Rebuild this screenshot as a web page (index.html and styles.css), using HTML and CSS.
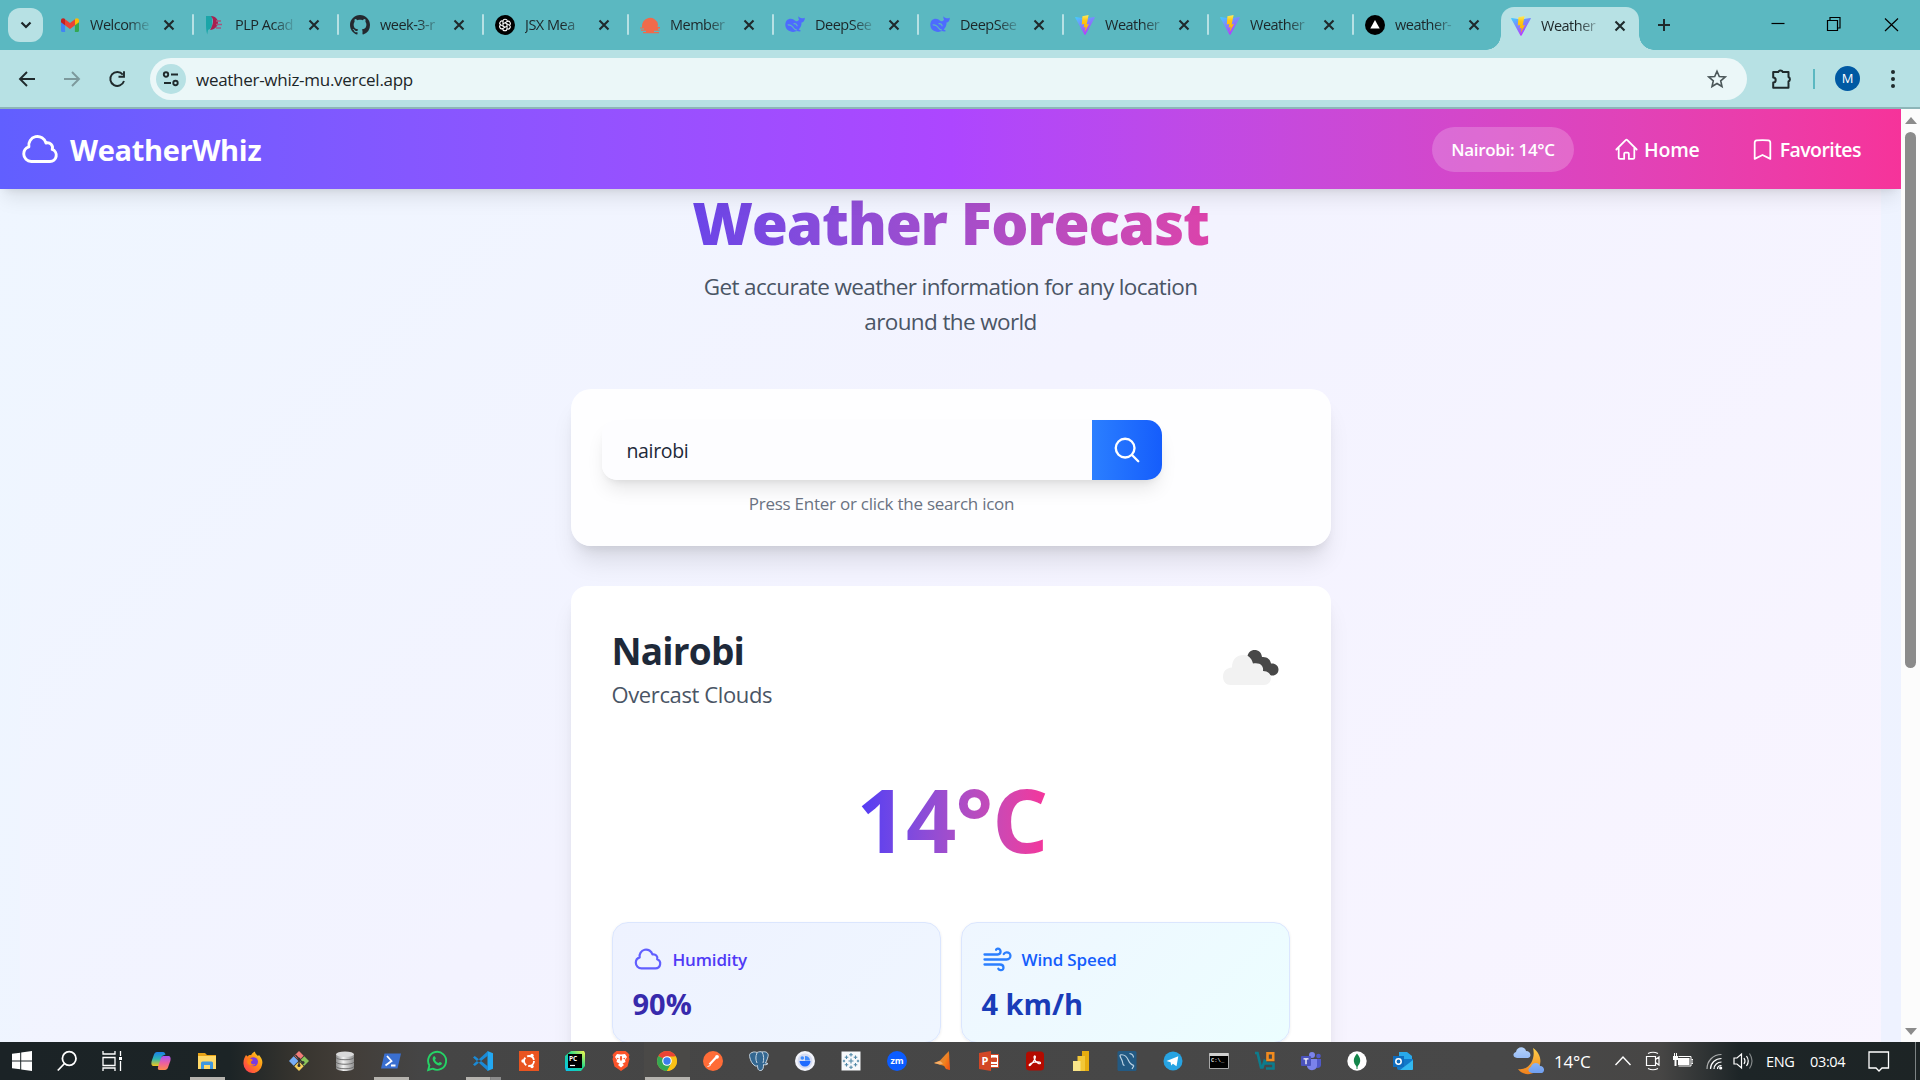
FILE: index.html
```html
<!DOCTYPE html>
<html lang="en">
<head>
<meta charset="utf-8">
<title>WeatherWhiz</title>
<link rel="stylesheet" href="styles.css">
</head>
<body>
<svg class="defs" width="0" height="0">
  <defs>
    <linearGradient id="gv" x1="0" y1="0" x2=".6" y2="1"><stop offset="0" stop-color="#41d1ff"/><stop offset="1" stop-color="#bd34fe"/></linearGradient>
    <linearGradient id="gy" x1="0" y1="0" x2="0" y2="1"><stop offset="0" stop-color="#ffea5f"/><stop offset=".3" stop-color="#ffc914"/><stop offset="1" stop-color="#ffa800"/></linearGradient>
    <linearGradient id="gc1" x1="0" y1="0" x2="0" y2="1"><stop offset="0" stop-color="#1a7fe8"/><stop offset=".5" stop-color="#2fb6b0"/><stop offset="1" stop-color="#f5c518"/></linearGradient>
    <linearGradient id="gc2" x1="0" y1="0" x2="0" y2="1"><stop offset="0" stop-color="#a855f7"/><stop offset=".5" stop-color="#ec5fa0"/><stop offset="1" stop-color="#ff8a4c"/></linearGradient>
    <linearGradient id="gff" x1="1" y1="0" x2="0" y2="1"><stop offset="0" stop-color="#ffe226"/><stop offset=".45" stop-color="#ff8a16"/><stop offset="1" stop-color="#ff2f5c"/></linearGradient>
    <linearGradient id="gdb" x1="0" y1="0" x2="1" y2="0"><stop offset="0" stop-color="#8b8b8b"/><stop offset=".4" stop-color="#f2f2f2"/><stop offset="1" stop-color="#8e8e8e"/></linearGradient>
    <linearGradient id="gmoon" x1="0" y1="0" x2="0" y2="1"><stop offset="0" stop-color="#ffd04a"/><stop offset="1" stop-color="#f0801c"/></linearGradient>
    <linearGradient id="gcl" x1="0" y1="0" x2="0" y2="1"><stop offset="0" stop-color="#b5d2fb"/><stop offset="1" stop-color="#6f9ff0"/></linearGradient>
    <linearGradient id="gpc" x1="0" y1="1" x2="1" y2="0"><stop offset="0" stop-color="#07c3f2"/><stop offset=".55" stop-color="#21d789"/><stop offset="1" stop-color="#fcf84a"/></linearGradient>
    <linearGradient id="gmat" x1="0" y1="0" x2="1" y2="1"><stop offset="0" stop-color="#f5a623"/><stop offset="1" stop-color="#f04a12"/></linearGradient>
    <symbol id="vite" viewBox="0 0 20 20"><path fill="url(#gv)" d="M.1 2.600 9.400 19.400q.6.8 1.200 0L19.900 2.600q.2-.8-.7-.7L10 3.500 .8 1.900q-.9-.1-.7.7z"/><path fill="url(#gy)" d="M13.600.1 7.400 1.300 6.800 9.600l2.500-.5-.7 3.400 2.100-.6-1.100 5.300 4.400-8.200-2.300.4z"/></symbol>
    <symbol id="deepseek" viewBox="0 0 20 20"><path fill="#4d6bfe" d="M.3 9.800C.3 5.600 3 3.800 5.600 3.700c2.300 0 3.800 1.300 5.400 2.600 1.400 0 2.300-.5 3-1.900-.8-1-.7-2-.5-3.100 1 1.600 2.200 1.500 3.300 1.900 1.200-.1 1.900 0 3-.5 0 3-1.400 4.500-3.300 4.900.2 3.200-1 5.200-2.800 6.900.9.500 1.700.9 2.400 1.500-1.500.8-2.700.4-4 .1C6.400 18.400.4 15.400.3 9.800z"/><path fill="none" stroke="#5bb8c1" stroke-width="1.200" d="M2.700 10c2-.8 4.700 1 5.900 3 1.200 1.700 2.300 2.100 3.400 2M8.600 8.700c2-.5 3.600.9 3.600 2.600"/></symbol>
    <symbol id="close" viewBox="0 0 20 20"><path d="m5.500 5.500 9 9m0-9-9 9" stroke="#1f2a2c" stroke-width="2.100" fill="none"/></symbol>
    <symbol id="cloud" viewBox="0 0 24 24"><path fill="none" stroke="currentColor" stroke-width="1.750" stroke-linecap="round" stroke-linejoin="round" d="M2.250 15a4.500 4.500 0 0 0 4.500 4.500H18a3.750 3.750 0 0 0 1.332-7.257 3 3 0 0 0-3.758-3.848 5.250 5.250 0 0 0-10.233 2.330A4.502 4.502 0 0 0 2.250 15Z"/></symbol>
  </defs>
</svg>
<div class="screen">
  <div class="tabstrip">
    <div class="tab-search"><svg width="14" height="14" viewBox="0 0 14 14"><path d="m2.500 4.500 4.500 4.500 4.500-4.500" fill="none" stroke="#1c2628" stroke-width="2.200"/></svg></div>
    <div class="tab"><svg class="fav" viewBox="0 0 20 20"><path fill="#4285f4" d="M1 5.500v10.200c0 .7.500 1.200 1.200 1.200h2.900V8.500z"/><path fill="#34a853" d="M19 5.500v10.200c0 .7-.5 1.200-1.200 1.200h-2.900V8.500z"/><path fill="#ea4335" d="M5 4.300 10 8l5-3.700v6L10 14l-5-3.700z"/><path fill="#c5221f" d="M1 5.500C1 3 3.600 2.600 5 4v6.300L1 7.300z"/><path fill="#fbbc04" d="M19 5.500C19 3 16.400 2.600 15 4v6.300l4-3z"/></svg><span>Welcome</span><svg class="x"><use href="#close"/></svg></div>
    <div class="tab"><svg class="fav" viewBox="0 0 20 20"><path fill="#1ba5a8" d="M1 1h6v8c0 4-2 5-4 6l-.8 4.500C1 15 1 12 1 8z"/><path fill="#a8204f" d="M6 1c10 1 9 13-1 14 2-3 5-10 1-14z"/><path d="M11 6h5m-5 3.500h6m-6 3.500h5" stroke="#a4587f" stroke-width="1.500"/></svg><span>PLP Acad</span><svg class="x"><use href="#close"/></svg></div>
    <div class="tab"><svg class="fav" viewBox="0 0 16 16"><path fill="#24292f" d="M8 0C3.580 0 0 3.580 0 8c0 3.540 2.290 6.530 5.470 7.590.4.070.55-.17.55-.38 0-.19-.01-.82-.01-1.490-2.010.37-2.530-.49-2.690-.94-.09-.23-.48-.94-.82-1.130-.28-.15-.68-.52-.01-.53.63-.01 1.080.58 1.230.82.72 1.210 1.870.87 2.330.66.07-.52.28-.87.51-1.070-1.780-.2-3.640-.89-3.640-3.950 0-.87.31-1.590.82-2.150-.08-.2-.36-1.020.08-2.120 0 0 .67-.21 2.200.82.64-.18 1.320-.27 2-.27s1.360.09 2 .27c1.530-1.040 2.200-.82 2.200-.82.44 1.100.16 1.920.08 2.120.51.56.82 1.270.82 2.150 0 3.070-1.870 3.750-3.650 3.950.29.25.54.73.54 1.480 0 1.070-.01 1.930-.01 2.200 0 .21.15.46.55.38A8.010 8.010 0 0 0 16 8c0-4.420-3.580-8-8-8z"/></svg><span>week-3-r</span><svg class="x"><use href="#close"/></svg></div>
    <div class="tab"><svg class="fav" viewBox="0 0 20 20"><circle cx="10" cy="10" r="10"/><g fill="none" stroke="#fff" stroke-width="1.100"><path id="petal" d="M8 11.200V6.300q0-2 2-2 2.300 0 2.300 2"/><use href="#petal" transform="rotate(60 10 10)"/><use href="#petal" transform="rotate(120 10 10)"/><use href="#petal" transform="rotate(180 10 10)"/><use href="#petal" transform="rotate(240 10 10)"/><use href="#petal" transform="rotate(300 10 10)"/></g></svg><span>JSX Mea</span><svg class="x"><use href="#close"/></svg></div>
    <div class="tab"><svg class="fav" viewBox="0 0 20 20"><path fill="#f06a4b" d="M2 12.500a8 8 0 1 1 16-3l-.5 2.500H20v1.500h-2v1.200h1.500v1H14v1.200h5v1.400H3v-1.400h3v-1.200H1v-1.200h3v-1H0v-1z"/></svg><span>Member</span><svg class="x"><use href="#close"/></svg></div>
    <div class="tab"><svg class="fav"><use href="#deepseek"/></svg><span>DeepSee</span><svg class="x"><use href="#close"/></svg></div>
    <div class="tab"><svg class="fav"><use href="#deepseek"/></svg><span>DeepSee</span><svg class="x"><use href="#close"/></svg></div>
    <div class="tab"><svg class="fav"><use href="#vite"/></svg><span>Weather</span><svg class="x"><use href="#close"/></svg></div>
    <div class="tab"><svg class="fav"><use href="#vite"/></svg><span>Weather</span><svg class="x"><use href="#close"/></svg></div>
    <div class="tab last"><svg class="fav" viewBox="0 0 20 20"><circle cx="10" cy="10" r="10"/><path fill="#fff" d="m10 5 4.700 8.500H5.300z"/></svg><span>weather-</span><svg class="x"><use href="#close"/></svg></div>
    <div class="tab active"><svg class="fav"><use href="#vite"/></svg><span>Weather</span><svg class="x"><use href="#close"/></svg></div>
    <svg class="newtab" width="20" height="20" viewBox="0 0 20 20"><path d="M10 4v12M4 10h12" stroke="#1f2a2c" stroke-width="2"/></svg>
    <div class="winctl">
      <svg width="56" height="50" viewBox="0 0 56 50"><path d="M21.500 23.500h13" stroke="#000" stroke-width="1.200"/></svg>
      <svg width="56" height="50" viewBox="0 0 56 50"><path d="M21.500 20.500h10v10h-10zM24 20v-2.500h10v10.500h-2" fill="none" stroke="#000" stroke-width="1.200"/></svg>
      <svg width="58" height="50" viewBox="0 0 58 50"><path d="m23 18.500 13 12.500m0-12.500L23 31" stroke="#000" stroke-width="1.200"/></svg>
    </div>
  </div>
  <div class="toolbar">
    <div class="nav">
      <svg width="20" height="20" viewBox="0 0 20 20"><path d="M18 10H3.500M10 3l-7 7 7 7" fill="none" stroke="#1f2a2c" stroke-width="1.900"/></svg>
      <svg width="20" height="20" viewBox="0 0 20 20"><path d="M2 10h14.500M10 3l7 7-7 7" fill="none" stroke="#7d999c" stroke-width="1.900"/></svg>
      <svg width="20" height="20" viewBox="0 0 20 20"><path d="M15.800 5.600A7 7 0 1 0 17 12M17 2.300v5.500h-5.500" fill="none" stroke="#1f2a2c" stroke-width="1.900"/></svg>
    </div>
    <div class="omnibox">
      <div class="site"><svg width="18" height="18" viewBox="0 0 18 18" fill="none" stroke="#1f2a2c" stroke-width="1.900"><circle cx="4" cy="4.500" r="2.200"/><path d="M9 4.500h7M2 13h7"/><circle cx="13.500" cy="13" r="2.200"/></svg></div>
      <span class="url">weather-whiz-mu.vercel.app</span>
      <svg class="star" width="20" height="20" viewBox="0 0 20 20"><path d="m10 2.200 2.300 5.300 5.800.5-4.400 3.800 1.300 5.700-5-3-5 3 1.300-5.700L1.900 8l5.800-.5z" fill="none" stroke="#4b5759" stroke-width="1.600"/></svg>
    </div>
    <svg class="ext" width="24" height="24" viewBox="0 0 24 24"><path d="M4.200 5h5a2.500 2.500 0 0 1 4.600 0h5.700v5a2.500 2.500 0 0 1 0 4.500v6.200H4.200v-5.200a2.500 2.500 0 0 0 0-5z" fill="none" stroke="#1f2a2c" stroke-width="2" stroke-linejoin="round"/></svg>
    <i class="sep"></i>
    <div class="avatar">M</div>
    <svg class="dots" width="6" height="20" viewBox="0 0 6 20" fill="#1f2a2c"><circle cx="3" cy="3" r="2"/><circle cx="3" cy="10" r="2"/><circle cx="3" cy="17" r="2"/></svg>
  </div>
  <div class="viewport">
    <div class="page">
      <header class="header">
        <svg class="logo"><use href="#cloud"/></svg>
        <span class="brand t">WeatherWhiz</span>
        <div class="pill"><span class="t">Nairobi: 14°C</span></div>
        <a class="link home"><svg width="25" height="25" viewBox="0 0 24 24"><path fill="none" stroke="currentColor" stroke-width="1.700" stroke-linecap="round" stroke-linejoin="round" d="m2.250 12 8.954-8.955a1.126 1.126 0 0 1 1.591 0L21.750 12M4.500 9.750v10.125c0 .621.504 1.125 1.125 1.125H9.750v-4.875c0-.621.504-1.125 1.125-1.125h2.250c.621 0 1.125.504 1.125 1.125V21h4.125c.621 0 1.125-.504 1.125-1.125V9.750"/></svg><span class="t">Home</span></a>
        <a class="link favs"><svg width="25" height="25" viewBox="0 0 24 24"><path fill="none" stroke="currentColor" stroke-width="1.700" stroke-linecap="round" stroke-linejoin="round" d="M17.593 3.322c1.100.128 1.907 1.077 1.907 2.185V21L12 17.250 4.500 21V5.507c0-1.108.806-2.057 1.907-2.185a48.507 48.507 0 0 1 11.186 0Z"/></svg><span class="t">Favorites</span></a>
      </header>
      <div class="stage">
        <main class="column">
          <h1 class="title">Weather Forecast</h1>
          <p class="lead">Get accurate weather information for any location<br>around the world</p>
          <section class="search-card">
            <div class="search"><div class="field"><span class="t">nairobi</span></div><div class="go"><svg width="30" height="30" viewBox="0 0 24 24"><path fill="none" stroke="#fff" stroke-width="1.900" stroke-linecap="round" d="m21 21-5.197-5.197m0 0A7.500 7.500 0 1 0 5.196 5.196a7.500 7.500 0 0 0 10.607 10.607Z"/></svg></div></div>
            <p class="hint">Press Enter or click the search icon</p>
          </section>
          <section class="weather">
            <div class="place">
              <div><h2 class="city">Nairobi</h2><p class="cond">Overcast Clouds</p></div>
              <svg class="wicon" width="56" height="36" viewBox="0 0 56 36"><path fill="#484848" d="M24 8C25 2 28 0 31.500 0c4 0 7 2.500 7.500 7 5-.5 8.500 2.500 9 6.500 4-.5 7.500 2 7.500 6 0 3.500-2.500 6-6 6-2 0-3.500-.5-5-2L24 14z"/><path fill="#f2f2f2" d="M8 35c-5 0-8-3.500-8-8.500 0-5 3-8.500 9-9C9 9 14 5 20.500 5c5 0 8 3 9.500 8.500C37 12 41 16 40 21c5 0 8 3 8 7 0 4-3 7-7 7z"/></svg>
            </div>
            <div class="temp"><span class="t">14°C</span></div>
            <div class="tiles">
              <div class="tile humid"><div class="label"><svg><use href="#cloud"/></svg><span class="t">Humidity</span></div><div class="val">90%</div></div>
              <div class="tile wind"><div class="label"><svg viewBox="0 0 30 30"><path fill="none" stroke="#2b7fff" stroke-width="2.300" stroke-linecap="round" stroke-linejoin="round" d="M2.500 10.500h13.200c3.800 0 3.800-6 0-5.800-.8.100-1.300.5-1.600 1M2.500 15.500h22c5.500 0 5-7.500 0-7.200-1.300.1-2.200.7-2.700 1.700M2.500 20.500h15.500c4.600 0 4.400 6 .7 5.700-1.300-.1-2-.6-2.400-1.400"/></svg><span class="t">Wind Speed</span></div><div class="val">4 km/h</div></div>
            </div>
          </section>
        </main>
      </div>
    </div>
    <div class="scroll"><i class="up"></i><i class="thumb"></i><i class="down"></i></div>
  </div>
  <div class="taskbar">
    <div class="sys">
      <svg viewBox="0 0 20 20" fill="#fff"><path d="M0 2.800 8.200 1.700v7.800H0zM9.200 1.500 20 0v9.500H9.200zM0 10.500h8.200v7.800L0 17.200zM9.200 10.500H20V20L9.200 18.500z"/></svg>
      <svg viewBox="0 0 20 20" fill="none" stroke="#fff" stroke-width="1.800"><circle cx="12.200" cy="7.500" r="6.800"/><path d="M7.500 12.500.8 19.500"/></svg>
      <svg viewBox="0 0 20 20" fill="none" stroke="#fff" stroke-width="1.300"><path d="M1 0v3h12V0M1 6.500h12v8H1zM1 20v-3h12v3M18.500 0v5m0 5v10"/><path d="M17 7.500h3" stroke-width="3"/></svg>
    </div>
    <div class="apps">
      <div><svg viewBox="0 0 20 20"><path fill="url(#gc1)" d="M6 1h6c1.500 0 2 1 2.500 2.500L11 5 8.500 15H3c-2.500 0-3-2-2.300-5L3 3.500C3.600 2 4.500 1 6 1z"/><path fill="url(#gc2)" d="M14 19H8.500C7 19 6.500 18 7 16L10 7c.6-1.500 1.500-2 3-2h4c2.500 0 3 2 2.300 5L17 16.500c-.6 1.500-1.500 2.500-3 2.500z"/></svg></div>
      <div class="open"><svg viewBox="0 0 20 20"><path fill="#e8a317" d="M1 2h7l2 2h9v4H1z"/><path fill="#ffd968" d="M1 5h18v13H1z"/><path fill="#3f97e0" d="M4 18v-6q0-1.500 1.500-1.500h9Q16 10.500 16 12v6h-3v-4H7v4z"/></svg></div>
      <div><svg viewBox="0 0 20 20"><path fill="url(#gff)" d="M3 4l1.500 1.500C6 4 7 4 8 4.200 9 2.500 10 1.500 12 .5c0 2 1 2.500 3 4.500l1-1c3 3.500 4 6 3 10a9.300 9.300 0 0 1-18.500-1C.2 9 1.500 6.500 3 4z"/><circle cx="10.500" cy="10.800" r="4.500" fill="#7a3be0"/><path fill="#ff8516" d="M5 8c2-.5 4 0 5 1-1 1-2 1-2 2.500 0 2 2.500 2.500 4.500 1.500-1 2.500-7.500 2.500-8.500-2z"/></svg></div>
      <div><svg viewBox="0 0 20 20"><path fill="#f27c78" d="m10 0 4.700 4.700-4.700 4.700-4.700-4.700z"/><path fill="#78aef5" d="m0 10 4.700-4.700L9.400 10l-4.700 4.700z"/><path fill="#8bc45a" d="m20 10-4.700-4.700-4.700 4.700 4.700 4.700z"/><path fill="#f5cf5c" d="m10 20 4.700-4.700-4.700-4.700-4.700 4.700z"/><path d="M6.500 4 10 8v7m0-7 4 4" stroke="#333" stroke-width="1.400" fill="none"/><circle cx="10" cy="8" r="1.500" fill="#333"/><circle cx="14" cy="11.500" r="1.500" fill="#333"/><circle cx="10" cy="14.500" r="1.500" fill="#333"/></svg></div>
      <div><svg viewBox="0 0 20 20"><path fill="url(#gdb)" d="M1 3v14c0 4 18 4 18 0V3z"/><ellipse cx="10" cy="3.200" rx="9" ry="2.800" fill="#d9d9d9"/><path d="M1 6.500c1 3 17 3 18 0M1 11c1 3 17 3 18 0M1 15.500c1 3 17 3 18 0" fill="none" stroke="#707070"/></svg></div>
      <div class="open"><svg viewBox="0 0 20 20"><path fill="#3a6fd0" d="M3.500 2.500H20l-3.500 15H0z"/><path d="m6 5 4.500 5-6 4.500M10 14.500h4.500" fill="none" stroke="#fff" stroke-width="1.800"/></svg></div>
      <div><svg viewBox="0 0 20 20"><path d="M1.200 19l1.200-4.500A9 9 0 1 1 5.700 17.700z" fill="none" stroke="#25d366" stroke-width="1.900"/><path fill="#25d366" d="M6.500 5.500c1.500-1 2 .5 2.300 2 0 .6-.8 1-.8 1.400.8 1.500 2 2.500 3.500 3 .5 0 .8-1.200 1.500-1 2 .9 2.200 1 1.700 2.200-1 2-3.500 1.500-5.200.5-3-2-5-5.500-3-8.100z"/></svg></div>
      <div class="open multi"><svg viewBox="0 0 20 20"><path fill="#23a8f2" d="M14.500 0 20 2.300v15.400L14.500 20z"/><path fill="#1a8ad6" d="M0 6.500 1.800 5 15 15.500V20zM0 13.500 1.800 15 15 4.500V0z"/></svg></div>
      <div><svg viewBox="0 0 20 20"><path fill="#e95420" d="M0 0h20v20H0z"/><circle cx="10" cy="10" r="5" fill="none" stroke="#fff" stroke-width="1.800" stroke-dasharray="8.500 2"/><g fill="#fff"><circle cx="4" cy="10" r="1.700"/><circle cx="13" cy="4.500" r="1.700"/><circle cx="13" cy="15.500" r="1.700"/></g></svg></div>
      <div><svg viewBox="0 0 20 20"><path fill="url(#gpc)" d="M6 0h13l1 2v13l-4 5H1l-1-3V5z"/><path d="M3 3h14v14H3z"/><text x="4" y="10" class="pc">PC</text><path d="M5 14.500h5" stroke="#fff" stroke-width="1.200"/></svg></div>
      <div><svg viewBox="0 0 20 20"><path fill="#fb542b" d="M5.500 0h9L17 2l1.500 2-.7 2 .7 2-2 7.500L10 20l-6.500-4.500L1.500 8l.7-2-.7-2L3 2z"/><path fill="#fff" d="m10 3.500 4-.5 2 3-2 3 .5 2-3 1.500 1.500 1.500-3 2.500-3-2.500L8.500 12.500l-3-1.500L6 9 4 6l2-3z"/><path fill="#fb542b" d="M9.300 5h1.400l.5 3-1.200 2.500L8.800 8zM5.500 6.500 8 7.500 6.500 8.500zM14.500 6.500 12 7.500l1.500 1z"/></svg></div>
      <div class="open cur"><svg viewBox="0 0 20 20"><circle cx="10" cy="10" r="10" fill="#fbc116"/><path fill="#ea4335" d="M10 10 1.340 5A10 10 0 0 1 18.660 5z"/><path fill="#34a853" d="M1.340 5A10 10 0 0 0 10 20l4.500-8z"/><path fill="#fbc116" d="M10 5.500h8.900A10 10 0 0 1 10 20l4.300-7.500z"/><circle cx="10" cy="10" r="4.800" fill="#fff"/><circle cx="10" cy="10" r="3.700" fill="#3b7ded"/></svg></div>
      <div><svg viewBox="0 0 20 20"><circle cx="10" cy="10" r="10" fill="#ff6c37"/><path d="m6.500 13.500 6.500-7" stroke="#fff" stroke-width="2.200"/><circle cx="14" cy="5.800" r="1.900" fill="#fff"/><path d="m4.500 15.500 3-1" stroke="#fff"/></svg></div>
      <div><svg viewBox="0 0 20 20"><path fill="#336791" stroke="#c7d6e3" stroke-width="1" d="M3 1.500c2-1 3.500-.5 5 0C10 .5 12 .5 13 1c4-1 7 1 6 4.500-.5 2-1.500 5-2.500 6.500l2.500.5c-1 1.500-3 1.500-4.500 1 0 3.500-.5 5.500-2.500 6-2.500.3-3.300-1-3.500-5-1 1-2 .8-3.500-.5C2 12 0 5 .7 3.500 1 2.500 1.700 2 3 1.500z"/><path d="M8 2c-1.500 3-1.500 7 0 10m5-11c2 3 2 8 1 11" fill="none" stroke="#c7d6e3"/></svg></div>
      <div><svg viewBox="0 0 20 20"><circle cx="10" cy="10" r="10" fill="#f2f4fb"/><circle cx="10" cy="10" r="7.500" fill="#d5dcf2"/><path fill="#1f6bff" d="M4.500 10h11a5.500 5.500 0 0 1-11 0z"/><path fill="#3f8cff" d="M10 9.500V5a5 5 0 0 1 5 4.500z"/><circle cx="7.300" cy="7" r="1.800" fill="#3f8cff"/></svg></div>
      <div><svg viewBox="0 0 20 20"><path fill="#f7f9fb" d="M.5.500h19v19H.5z"/><path d="M10 7.500v5M7.500 10h5M10 2v3.500M8.200 3.700h3.600M10 14.500V18m-1.800-1.700h3.600M5.500 4.500V8M3.700 6.200h3.600M14.500 4.500V8m-1.800-1.800h3.600M5.500 12v3.500m-1.800-1.700h3.600m7.200-1.800v3.500m-1.800-1.700h3.600M3 8.800v2.400M1.800 10h2.400M17 8.800v2.400M15.800 10h2.400" stroke="#5189a8" stroke-width="1.100"/></svg></div>
      <div><svg viewBox="0 0 20 20"><circle cx="10" cy="10" r="10" fill="#0b5cff"/><text x="10" y="13" class="zm">zm</text></svg></div>
      <div><svg viewBox="0 0 20 20"><path fill="#e8842a" d="m1 12 6-2.500L13 3l3-3-.5 6 1 13-5-4z"/><path fill="url(#gmat)" d="M10 13 16 1l1 18-4-1z"/><path fill="#f5b06a" d="m1 12 6-2 3 2.500-3 1z"/></svg></div>
      <div><svg viewBox="0 0 20 20"><path fill="#fff" stroke="#d24726" d="M10 3.500h9.500v13H10z"/><path d="M12.500 7h5v3.500h-5zM12 13.500h6" fill="#d24726" stroke="#d24726"/><path fill="#d24726" d="M0 2 12 0v20L0 18z"/><text x="2.500" y="14" class="pp">P</text></svg></div>
      <div><svg viewBox="0 0 20 20"><rect x="1" y=".5" width="18" height="19" rx="3.500" fill="#b30b00"/><path d="M9.500 5c2.500-.5-.5 6-4.500 9.500-1.500.5-1-1.500 1.500-2.500 3.500-1.300 9-1.500 9 0 0 1.500-3 .5-4.500-1.500S8.500 6 9.500 5z" fill="none" stroke="#fff" stroke-width="1.200"/></svg></div>
      <div><svg viewBox="0 0 20 20"><path fill="#e6ad10" d="M11 0h7v20h-7z"/><path fill="#f2c737" d="M6.500 5H14v15H6.500z"/><path fill="#f9e589" d="M2 10h7.500v10H2z"/></svg></div>
      <div><svg viewBox="0 0 20 20"><rect x=".5" width="19" height="20" rx="1.500" fill="#235a83"/><path d="M3 4c4-1 7 2 8.500 5.500C13 13 15 14 17 14.500M3 4c0 3 2 4 2.500 7 .3 2 1 4 2 3M12.500 2.500c2.500.5 4 2 4 4M17 14.500 15 18" fill="none" stroke="#bcd3e4" stroke-width="1.200"/></svg></div>
      <div><svg viewBox="0 0 20 20"><circle cx="10" cy="10" r="9.500" fill="#27a3e2"/><path fill="#fff" d="m3.500 10 11.800-4.700-1.800 10-3.600-2.600-1.700 1.700-.6-3.200z"/></svg></div>
      <div><svg viewBox="0 0 20 20"><path fill="#000" stroke="#a8a8a8" d="M.5 2.500h19v15H.5z"/><path fill="#d0d0d0" d="M.5 2h19v3H.5z"/><text x="2" y="11" class="cmd">C:\_</text></svg></div>
      <div><svg viewBox="0 0 20 20" fill="none" stroke-width="2.600"><path d="M0 2h2.500L6 16.500h1.500L10 8.500M10.500 9.500v3h8M18.500 11.500v6H11" stroke="#0d7c8c"/><path d="M12.500 9V2.300h5.700V9z" stroke="#f28b1e"/></svg></div>
      <div><svg viewBox="0 0 20 20"><circle cx="17.500" cy="5" r="2.300" fill="#5059c9"/><path fill="#5059c9" d="M14 8h6v6c0 3-4 4-6 2z"/><circle cx="11" cy="4" r="3" fill="#7b83eb"/><path fill="#7b83eb" d="M6 8h10v6.500c0 6-9 6-10 1z"/><rect y="5" width="10" height="10" rx="1" fill="#4b53bc"/><path d="M2.500 7.800h5M5 7.800v5.500" stroke="#fff" stroke-width="1.300"/></svg></div>
      <div><svg viewBox="0 0 20 20"><circle cx="10" cy="10" r="9.700" fill="#fff"/><path fill="#13864b" d="M10 2.500c4 4.500 4.500 9 0 13.500-4.500-4.500-4-9 0-13.500z"/><path d="M10 13v5" stroke="#13864b"/></svg></div>
      <div><svg viewBox="0 0 20 20"><path fill="#28a8ea" d="M6 1h8l5 4v8H6z"/><path fill="#1179c9" d="M4 8h16v9q0 2-2 2H6q-2 0-2-2z"/><path fill="#32b8f0" d="M20 9v9q0 1-1 1H7z"/><path fill="#0f6cbd" d="M0 5h11v11H0z"/><circle cx="5.500" cy="10.500" r="2.700" fill="none" stroke="#fff" stroke-width="1.500"/></svg></div>
    </div>
    <div class="tray">
      <svg class="moon" width="32" height="28" viewBox="0 0 32 28"><path fill="url(#gmoon)" d="M20 1c9 6 10 18 2 24-6 4-14 2-17-3 11 2 18-10 15-21z"/><path fill="url(#gcl)" d="M4 11c-4 0-5-5-1-6C4-1 12-1 13 4c5 0 6 6 2 7zM19 26c-4 0-5-5-1-6 1-5 8-5 9-1 5 0 5 6 2 7z"/></svg>
      <span class="deg">14°C</span>
      <svg class="chev" width="18" height="12" viewBox="0 0 18 12"><path d="m1.500 10 7.500-8 7.500 8" fill="none" stroke="#fff" stroke-width="1.400"/></svg>
      <svg class="meet" width="16" height="20" viewBox="0 0 16 20"><path d="M3 2.500q5-2.500 10 0M3 17.500q5 2.500 10 0M1.500 5.500h9v9h-9zM10.500 8.500l3.500-2.500v8l-3.500-2.500" fill="none" stroke="#fff" stroke-width="1.200"/></svg>
      <svg class="batt" width="20" height="16" viewBox="0 0 20 16"><path d="M5.500 3.500H18v9.500H5.500M18.500 6.500h1.500v4h-1.500" stroke="#fff" fill="none"/><path fill="#fff" d="M5 5h11.500v7H5zM0 3h5v4H3.500v6h-2V7H0z"/><path d="M1.500 0v4m2-4v4" stroke="#fff"/></svg>
      <svg class="wifi" width="17" height="17" viewBox="0 0 17 17" fill="none" stroke="#fff" stroke-width="1.200"><path d="M1 16C1 8 7 1.500 15.500 1.500" opacity=".6"/><path d="M4.500 16c0-6 5-10.500 11-10.500M8 16c0-4 3.500-7 7.500-7M11.500 16c0-2 1.500-3.500 4-3.500"/><circle cx="14.700" cy="15" r="1" fill="#fff"/></svg>
      <svg class="vol" width="21" height="18" viewBox="0 0 21 18" fill="none" stroke="#fff" stroke-width="1.200"><path d="M1 6h3l4.500-4v14L4 12H1zM11 6q2 3 0 6M13.500 4q3.500 5 0 10"/><path d="M16.500 1.500q5 7.500 0 15" opacity=".45"/></svg>
      <span class="lang">ENG</span><span class="clock">03:04</span>
      <svg class="note" width="22" height="21" viewBox="0 0 22 21"><path d="M1 1h19.500v16h-6.500l-3 3-3-3H1z" fill="none" stroke="#fff" stroke-width="1.300"/></svg>
      <i class="peek"></i>
    </div>
  </div>
</div>
</body>
</html>
```
FILE: styles.css
```css
* { box-sizing: border-box; }
body { margin: 0; font-family: "Open Sans", "Noto Sans", sans-serif; overflow: hidden; }
h1, h2, p { margin: 0; font-weight: 400; }
svg { display: block; flex: none; }
.defs { position: absolute; }
.screen { width: 1920px; height: 1080px; display: flex; flex-direction: column; overflow: hidden; }
.t { white-space: nowrap; }

/* browser chrome */
.tabstrip { height: 50px; flex: none; display: flex; align-items: center; background: #5bb8c1; padding-left: 8px; }
.tab-search { width: 35px; height: 34px; border-radius: 12px; background: #b7e1e4; display: flex; align-items: center; justify-content: center; margin-right: 5px; }
.tab { position: relative; width: 145px; height: 42px; flex: none; display: flex; align-items: center; padding-left: 12px; }
.tab::after { content: ""; position: absolute; right: -1px; top: 10px; width: 2px; height: 21px; border-radius: 1px; background: #b7e1e4; }
.tab.last::after { display: none; }
.fav { width: 20px; height: 20px; }
.tab span { margin-left: 10px; width: 60px; flex: none; white-space: nowrap; font-size: 14.5px; line-height: 24px; letter-spacing: -.5px; color: #1c2628; -webkit-mask-image: linear-gradient(90deg, #000 62%, rgba(0,0,0,.1)); mask-image: linear-gradient(90deg, #000 62%, rgba(0,0,0,.1)); }
.tab .x { width: 20px; height: 20px; margin-left: 9px; }
.tab.active { width: 138px; height: 43px; align-self: flex-end; background: #b7e1e4; border-radius: 13px 13px 0 0; margin-left: 3px; padding: 0 0 6px 10px; }
.tab.active::before, .tab.active::after { content: ""; position: absolute; top: auto; bottom: 0; width: 15px; height: 15px; border-radius: 0; }
.tab.active::before { left: -15px; background: radial-gradient(circle at 0 0, transparent 14.500px, #b7e1e4 15px); }
.tab.active::after { right: -15px; background: radial-gradient(circle at 100% 0, transparent 14.500px, #b7e1e4 15px); }
.newtab { margin-left: 15px; }
.winctl { display: flex; margin-left: auto; }
.toolbar { height: 59px; flex: none; background: #b7e1e4; border-bottom: 2px solid #8db5b8; display: flex; align-items: center; }
.nav { width: 150px; display: flex; gap: 25px; padding-left: 17px; }
.omnibox { width: 1597px; height: 42px; border-radius: 21px; background: #ebf7f8; display: flex; align-items: center; padding-left: 6px; }
.site { width: 30px; height: 30px; border-radius: 50%; background: #b7e1e4; display: flex; align-items: center; justify-content: center; }
.url { margin-left: 10px; padding-top: 1px; font-size: 17px; letter-spacing: -.28px; color: #1c2628; white-space: nowrap; }
.star { margin-left: auto; margin-right: 20px; }
.ext { margin-left: 22px; }
.sep { width: 2px; height: 20px; background: #5bb8c1; margin-left: 20px; }
.avatar { width: 25px; height: 25px; border-radius: 50%; background: #0059a3; color: #fff; font-size: 13px; line-height: 25px; text-align: center; margin-left: 20px; }
.dots { margin-left: 30px; }

/* page */
.viewport { flex: 1; min-height: 0; display: flex; }
.page { width: 1901px; display: flex; flex-direction: column; background: linear-gradient(135deg, #eff6ff, #eef2ff); overflow: hidden; }
.header { position: relative; z-index: 1; height: 80px; flex: none; display: flex; align-items: center; color: #fff; background: linear-gradient(to right in oklab, #615fff, #ad46ff 50%, #f6339a); box-shadow: 0 12px 19px -4px rgba(0,0,0,.1), 0 5px 8px -5px rgba(0,0,0,.1); padding-right: 40px; }
.logo { width: 40px; height: 40px; margin-left: 20px; }
.brand { margin-left: 10px; font-size: 29px; font-weight: 700; letter-spacing: -.32px; }
.pill { width: 142px; height: 45px; border-radius: 23px; background: rgba(255,255,255,.2); margin-left: auto; display: flex; align-items: center; justify-content: center; font-size: 17px; font-weight: 600; letter-spacing: -.3px; padding-top: 1px; }
.link { display: flex; align-items: center; font-size: 19.500px; font-weight: 600; }
.home { margin-left: 40px; letter-spacing: -.2px; }
.favs { margin-left: 50px; letter-spacing: -.55px; }
.link .t { margin-left: 5px; }
.stage { flex: 1; min-height: 0; margin: 0 20px; background: linear-gradient(135deg, #eff6ff, #f3f3ff 45%, #faf5ff 110%); }
.column { width: 760px; margin: 0 auto; }
.title { text-align: center; font-size: 58.500px; font-weight: 800; line-height: 66px; letter-spacing: -1.200px; background: linear-gradient(to right in oklab, #4f39f6, #f6339a); -webkit-background-clip: text; background-clip: text; color: transparent; }
.lead { text-align: center; font-size: 22.500px; letter-spacing: -.62px; line-height: 35px; margin-top: 14px; color: #4a5565; }
.search-card { margin-top: 50px; height: 157px; padding: 31px; border-radius: 20px; background: rgba(255,255,255,.9); box-shadow: 0 20px 25px -5px rgba(0,0,0,.1), 0 8px 12px -6px rgba(0,0,0,.1); }
.search { width: 560px; height: 60px; display: flex; border-radius: 15px; box-shadow: 0 12px 19px -4px rgba(0,0,0,.1), 0 5px 8px -5px rgba(0,0,0,.1); }
.field { width: 490px; border-radius: 15px 0 0 15px; background: #fdfdff; padding-left: 25px; font-size: 19.500px; line-height: 61px; letter-spacing: -.35px; color: #1e2939; }
.go { width: 70px; border-radius: 0 15px 15px 0; background: linear-gradient(90deg, #2b7fff, #155dfc); display: flex; align-items: center; justify-content: center; }
.hint { width: 560px; text-align: center; margin-top: 11px; font-size: 17px; letter-spacing: -.25px; line-height: 25px; color: #6a7282; }
.weather { margin-top: 40px; height: 520px; padding: 42px 41px; border-radius: 16px; background: #fff; box-shadow: 0 20px 25px -5px rgba(0,0,0,.1), 0 8px 12px -6px rgba(0,0,0,.1); }
.place { display: flex; justify-content: space-between; }
.city { font-size: 37px; font-weight: 700; letter-spacing: -.8px; line-height: 46px; color: #1e2939; }
.cond { margin-top: 5px; font-size: 22px; letter-spacing: -.38px; line-height: 30px; color: #4a5565; }
.wicon { margin: 22px 11px 0 0; }
.temp { text-align: center; margin-top: 65px; font-size: 88px; font-weight: 700; line-height: 90px; padding-left: 3px; letter-spacing: -.8px; }
.temp .t { display: inline-block; background: linear-gradient(to right in oklab, #4f39f6, #f6339a); -webkit-background-clip: text; background-clip: text; color: transparent; }
.tiles { display: grid; grid-template-columns: 329px 329px; gap: 20px; margin-top: 58px; }
.tile { height: 121px; border-radius: 16px; border: 1px solid #dbe6fe; padding: 24px 20px; box-shadow: 0 1px 3px rgba(0,0,0,.08); }
.humid { background: linear-gradient(135deg, #eef2ff, #eff6ff); color: #372aac; }
.wind { background: linear-gradient(135deg, #eff6ff, #ecfeff); color: #193cb8; }
.label { display: flex; align-items: center; height: 25px; font-size: 17px; font-weight: 600; letter-spacing: -.15px; }
.label svg { width: 30px; height: 30px; margin: -2px 10px 0 0; }
.humid .label { color: #4f39f6; }
.humid .label svg { color: #615fff; }
.wind .label { color: #155dfc; }
.val { margin-top: 12px; font-size: 29px; font-weight: 700; line-height: 40px; }
.scroll { width: 19px; background: #fcfcfc; display: flex; flex-direction: column; align-items: center; }
.up, .down { width: 0; height: 0; border: 6px solid transparent; }
.up { border-top: 0; border-bottom: 7px solid #8b8b8b; margin-top: 8px; }
.thumb { width: 11px; height: 536px; border-radius: 6px; background: #8b8b8b; margin-top: 8px; }
.down { border-bottom: 0; border-top: 7px solid #8b8b8b; margin-top: auto; margin-bottom: 7px; }

/* taskbar */
.taskbar { height: 38px; flex: none; display: flex; background: linear-gradient(90deg, #1b2326 0, #1c2426 230px, #38352f 300px, #423d38 345px, #454545 420px, #484848 1500px, #474645 1660px, #1d2527 1740px, #1d2425); }
.sys { width: 138px; display: flex; align-items: center; padding-left: 12px; gap: 25px; }
.sys svg, .apps svg { width: 20px; height: 20px; overflow: visible; }
.apps { display: flex; }
.apps div { width: 46px; height: 38px; display: flex; align-items: center; justify-content: center; position: relative; }
.open::after { content: ""; position: absolute; left: 6px; right: 5px; bottom: 0; height: 3px; background: #b5b3ae; }
.multi::after { background: linear-gradient(90deg, #b5b3ae 68%, #777 68%, #8b8b8b 72%); }
.apps .cur { background: #4a4947; }
.cur::after { left: 1px; right: 0; }
.pc { font: 700 6.500px "Open Sans", sans-serif; fill: #fff; }
.zm { font: 700 9px "Open Sans", sans-serif; fill: #fff; text-anchor: middle; }
.pp { font: 700 11px "Open Sans", sans-serif; fill: #fff; }
.cmd { font: 700 5.500px "Liberation Mono", monospace; fill: #ddd; }
.tray { flex: 1; display: flex; align-items: center; color: #fff; font-size: 17px; }
.moon { margin-left: 87px; }
.deg { width: 56px; margin-left: 9px; letter-spacing: -.2px; }
.chev { margin-left: 4px; }
.meet { margin-left: 13px; }
.batt { margin-left: 12px; }
.wifi { margin-left: 13px; }
.vol { margin-left: 10px; }
.lang { margin-left: 12px; width: 44px; font-size: 14.500px; letter-spacing: -.3px; }
.clock { font-size: 14.500px; letter-spacing: -.35px; }
.note { margin-left: auto; }
.peek { width: 1px; height: 38px; background: #7d8384; margin: 0 4px 0 25px; }
```
